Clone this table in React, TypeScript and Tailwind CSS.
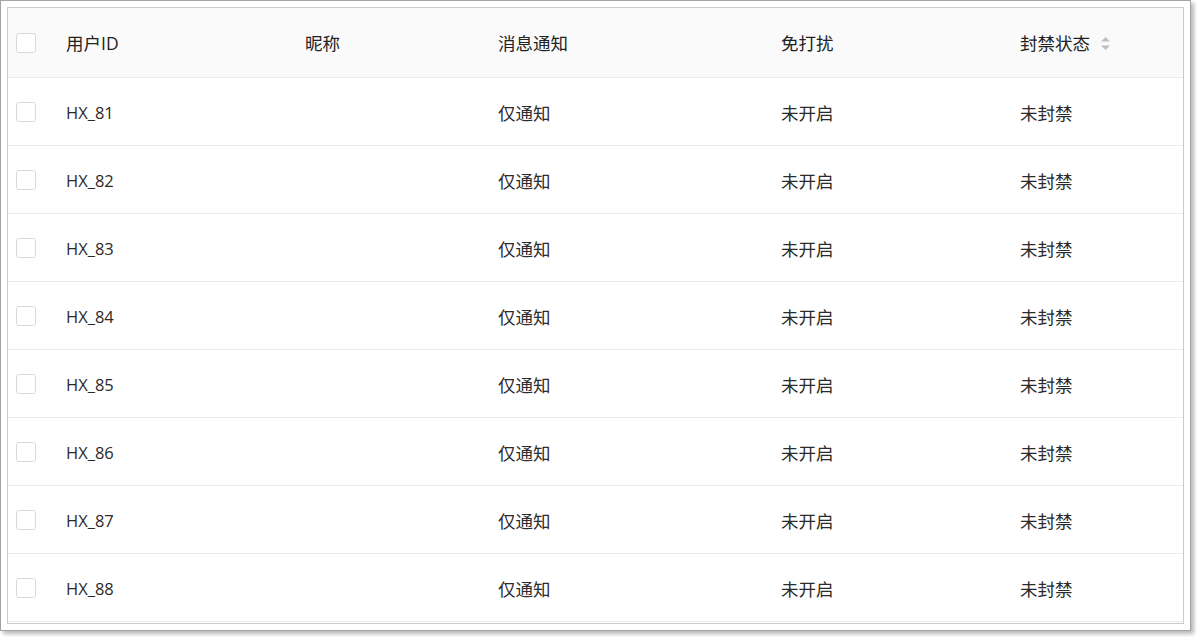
import React from "react";

const rows = ["HX_81", "HX_82", "HX_83", "HX_84", "HX_85", "HX_86", "HX_87", "HX_88"];

const grid = "grid grid-cols-[42px_239px_193px_283px_239px_1fr] items-center";

function Checkbox() {
  return <div className="w-5 h-5 rounded-[3px] border border-[#d9d9d9] bg-white" />;
}

function SortIcon() {
  return (
    <svg width="11" height="15" viewBox="0 0 11 15" className="ml-[10px]">
      <path d="M5.5 1 L10 5.5 L1 5.5 Z" fill="#bfbfbf" />
      <path d="M5.5 14 L10 9.5 L1 9.5 Z" fill="#bfbfbf" />
    </svg>
  );
}

export default function App() {
  return (
    <div
      className="w-[1197px] h-[637px] bg-white"
      style={{ fontFamily: '"Open Sans", "Noto Sans CJK SC", sans-serif' }}
    >
      <div className="w-[1191px] h-[631px] border border-[#a3a3a3] bg-white p-[6px] shadow-[3px_3px_4px_rgba(0,0,0,0.28)]">
        <div className="h-full border border-[#cbcbcb] bg-white">
          <div className={`${grid} h-[70px] bg-[#fafafa] border-b border-[#ebebeb] text-[17.5px] text-[#222222]`}>
            <div className="pl-2 flex items-center">
              <Checkbox />
            </div>
            <div className="pl-4 pt-[2px]">用户ID</div>
            <div className="pl-4 pt-[2px]">昵称</div>
            <div className="pl-4 pt-[2px]">消息通知</div>
            <div className="pl-4 pt-[2px]">免打扰</div>
            <div className="pl-4 pt-[2px] flex items-center">
              <span>封禁状态</span>
              <SortIcon />
            </div>
          </div>
          {rows.map((id) => (
            <div
              key={id}
              className={`${grid} h-[68px] border-b border-[#ebebeb] text-[17.5px] text-[#2b2b2b]`}
            >
              <div className="pl-2 flex items-center">
                <Checkbox />
              </div>
              <div className="pl-4 pt-[3px] text-[16.5px]">{id}</div>
              <div className="pl-4 pt-[3px]"></div>
              <div className="pl-4 pt-[3px]">仅通知</div>
              <div className="pl-4 pt-[3px]">未开启</div>
              <div className="pl-4 pt-[3px]">未封禁</div>
            </div>
          ))}
        </div>
      </div>
    </div>
  );
}
